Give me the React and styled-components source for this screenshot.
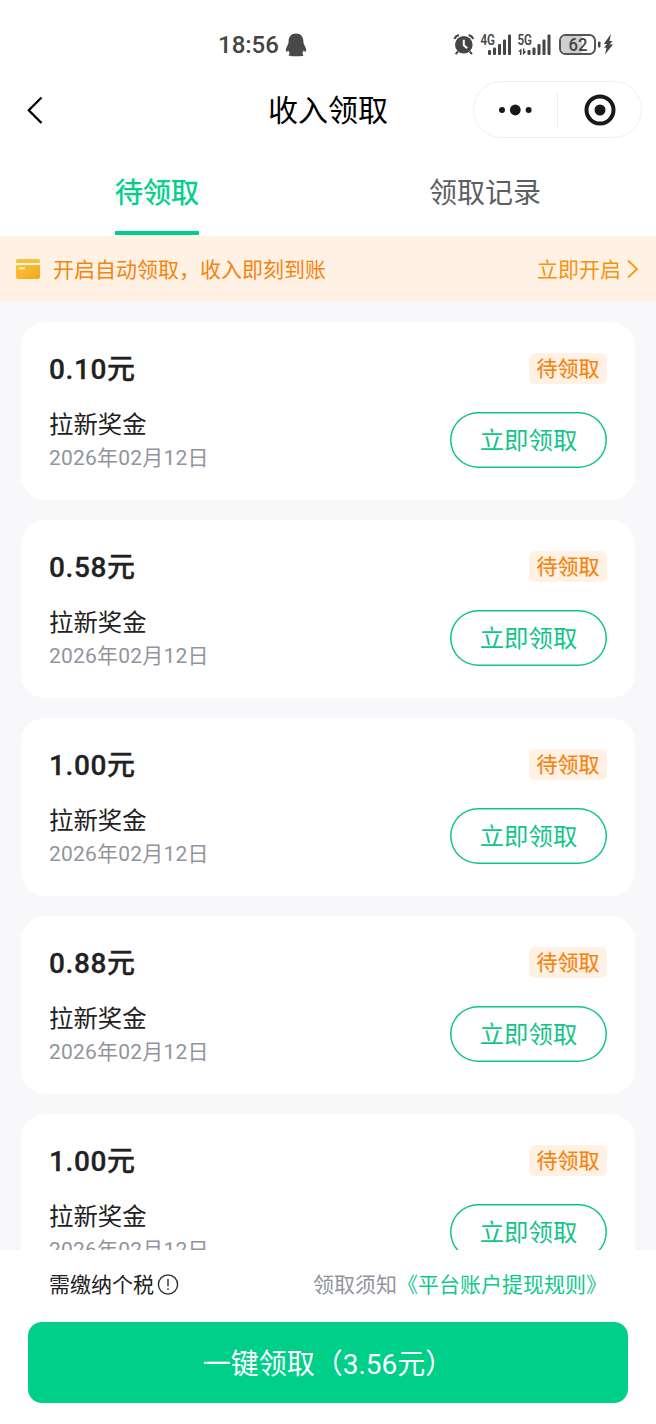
import React from "react";
import styled, { createGlobalStyle } from "styled-components";

const GlobalStyle = createGlobalStyle`
  * {
    box-sizing: border-box;
  }
  :root {
    --point-color: #00cf8a;
    --warn-color: #f5830f;
    --warn-bg: #fff1e3;
    --page-bg: #f8f8fb;
    --text-color: #1f2123;
    --sub-color: #92949c;
  }
  body {
    margin: 0;
    background-color: #fff;
    color: var(--text-color);
    font-family: Roboto, "Noto Sans CJK SC", sans-serif;
  }
  button {
    font-family: inherit;
    padding: 0;
    cursor: pointer;
  }
`;

const Page = styled.div`
  width: 656px;
  height: 1424px;
  display: flex;
  flex-direction: column;
  overflow: hidden;
  background-color: #fff;
`;

const StatusBar = styled.div`
  height: 75px;
  padding: 14px 42px 0 218px;
  display: flex;
  align-items: center;
  justify-content: space-between;
  color: #454545;
`;

const Clock = styled.div`
  display: flex;
  align-items: center;
  gap: 6px;
  font-size: 24px;
  font-weight: 500;
  line-height: 30px;
`;

const NavBar = styled.div`
  height: 69px;
  padding: 0 14px 0 24px;
  display: grid;
  grid-template-columns: 1fr auto 1fr;
  align-items: center;
  color: #000;
`;

const BackButton = styled.button`
  display: flex;
  border: none;
  background: none;
  color: inherit;
`;

const Title = styled.h1`
  margin: 0 10px 0 0;
  padding-top: 2px;
  font-size: 30px;
  font-weight: 400;
  line-height: 40px;
`;

const Capsule = styled.div`
  justify-self: end;
  width: 169px;
  height: 57px;
  border: 1px solid #f0f0f0;
  border-radius: 29px;
  display: flex;
  align-items: center;
`;

const CapsuleItem = styled.div`
  flex: 1;
  height: 36px;
  display: flex;
  align-items: center;
  justify-content: center;
  & + & {
    border-left: 1px solid #efefef;
  }
`;

const Tabs = styled.div`
  height: 92px;
  display: flex;
`;

const TabItem = styled.div`
  flex: 1;
  display: flex;
  justify-content: center;
  padding-right: 14px;
  span {
    height: 91px;
    padding-top: 30px;
    font-size: 28px;
    line-height: 40px;
    color: ${({ $active }) => ($active ? "var(--point-color)" : "#5c5e63")};
    -webkit-text-stroke: ${({ $active }) => ($active ? "0.4px" : "0")};
    border-bottom: 4px solid
      ${({ $active }) => ($active ? "var(--point-color)" : "transparent")};
  }
`;

const Banner = styled.div`
  height: 66px;
  padding: 0 17px 0 15px;
  display: flex;
  align-items: center;
  background-color: var(--warn-bg);
  color: var(--warn-color);
  font-size: 21px;
  line-height: 30px;
`;

const BannerText = styled.p`
  flex: 1;
  margin: 1px 0 0 12px;
`;

const BannerLink = styled.div`
  display: flex;
  align-items: center;
  gap: 5px;
  color: #f8920a;
  span {
    padding-top: 1px;
  }
`;

const List = styled.div`
  flex: 1;
  min-height: 0;
  overflow: hidden;
  padding: 20px 21px 0;
  display: flex;
  flex-direction: column;
  gap: 20px;
  background-color: var(--page-bg);
`;

const Card = styled.div`
  flex: none;
  height: 178px;
  padding: 31px 28px 0;
  border-radius: 24px;
  background-color: #fff;
`;

const CardRow = styled.div`
  display: flex;
  align-items: center;
  justify-content: space-between;
  & + & {
    margin-top: 23px;
  }
`;

const Amount = styled.div`
  padding-top: 2px;
  font-size: 28px;
  font-weight: 500;
  line-height: 29px;
  letter-spacing: 0.6px;
  -webkit-text-stroke: 0.3px;
`;

const Badge = styled.div`
  width: 78px;
  height: 31px;
  padding-top: 1px;
  border-radius: 6px;
  background-color: var(--warn-bg);
  color: var(--warn-color);
  font-size: 21px;
  line-height: 31px;
  text-align: center;
  -webkit-text-stroke: 0.2px;
`;

const Reason = styled.div`
  padding-top: 2px;
  font-size: 24.4px;
  line-height: 32px;
`;

const DateText = styled.div`
  padding-top: 1px;
  font-size: 21px;
  line-height: 33px;
  letter-spacing: 0.2px;
  color: var(--sub-color);
`;

const ClaimButton = styled.button`
  width: 157px;
  height: 56px;
  margin-bottom: 2px;
  padding-top: 2px;
  border: none;
  border-radius: 28px;
  box-shadow: inset 0 0 0 1.5px #12c48a;
  background-color: #fff;
  color: #12c48a;
  font-size: 24.4px;
  line-height: 36px;
`;

const Footer = styled.div`
  height: 174px;
  padding: 19px 28px 0;
  background-color: #fff;
`;

const FooterNotes = styled.div`
  display: flex;
  justify-content: space-between;
  padding: 0 21px;
  font-size: 21px;
  line-height: 32px;
`;

const TaxNote = styled.div`
  display: flex;
  align-items: center;
  gap: 3px;
`;

const RuleNote = styled.div`
  color: var(--sub-color);
  a {
    color: #10c88c;
  }
`;

const ClaimAllButton = styled.button`
  display: block;
  width: 100%;
  height: 81px;
  margin-top: 21px;
  padding-bottom: 2px;
  border: none;
  border-radius: 14px;
  background-color: var(--point-color);
  color: #fff;
  font-size: 28px;
`;

const PenguinIcon = () => (
  <svg width="22" height="24" viewBox="0 0 22 24" fill="#484848">
    <path d="M11 0.5C6.2 0.5 3.6 3.8 3.6 8.4C3.6 9.8 3.2 11 2.4 12.6C1.2 14.8 0.4 17 1 18.4C1.5 19 2.5 18.4 3.4 17.6C3.7 18.8 4.3 19.8 5 20.6C4 21 3.6 21.8 3.8 22.6C4.1 23.3 6.200 23.300 11 23.300C15.800 23.300 17.900 23.300 18.200 22.600C18.400 21.800 18 21 17 20.600C17.700 19.800 18.300 18.800 18.600 17.600C19.500 18.400 20.500 19 21 18.400C21.600 17 20.800 14.800 19.600 12.600C18.800 11 18.400 9.800 18.400 8.400C18.400 3.800 15.800 0.500 11 0.500Z" />
  </svg>
);

const StatusIcons = () => (
  <svg
    width="162"
    height="26"
    viewBox="0 0 162 26"
    fill="#454545"
    fontFamily="Roboto, sans-serif"
  >
    {/* alarm */}
    <circle cx="11.800" cy="12.800" r="8.800" />
    <path
      d="M2.400 7Q3.600 3.800 7 3M21.200 7Q20 3.800 16.600 3M6 19.500L3.600 22.200M17.600 19.500L20 22.200"
      fill="none"
      stroke="#454545"
      strokeWidth="2"
    />
    <path d="M11.800 7.800V13.200L15.200 16.200" fill="none" stroke="#fff" strokeWidth="2" />
    {/* first sim */}
    <text x="28.500" y="13" fontSize="15" fontWeight="600" textLength="14.500" lengthAdjust="spacingAndGlyphs">4G</text>
    <rect x="36" y="18" width="3" height="5" rx="1" />
    <rect x="41" y="15.500" width="3" height="7.500" rx="1" />
    <rect x="46" y="12" width="3" height="11" rx="1" />
    <rect x="51" y="7.500" width="3" height="15.500" rx="1" />
    <rect x="56" y="2.500" width="3" height="20.500" rx="1" />
    {/* second sim */}
    <text x="65.500" y="13" fontSize="15" fontWeight="600" textLength="14.500" lengthAdjust="spacingAndGlyphs">5G</text>
    <path d="M66 19.500L69.500 16.500V23H68V19.800ZM71 16.500H72.400V19.200L74.500 19.500L71 23Z" />
    <rect x="75.500" y="18" width="3" height="5" rx="1" />
    <rect x="80.500" y="15.500" width="3" height="7.500" rx="1" />
    <rect x="85.500" y="12" width="3" height="11" rx="1" />
    <rect x="90.500" y="7.500" width="3" height="15.500" rx="1" />
    <rect x="95.500" y="2.500" width="3" height="20.500" rx="1" />
    {/* battery */}
    <rect x="108" y="3" width="35" height="19" rx="5.500" fill="#fff" stroke="#555" strokeWidth="2" />
    <path d="M114 4H130V21H114Q109 21 109 16V9Q109 4 114 4Z" fill="#cfcfcf" />
    <text x="126" y="19" fontSize="18.500" fontWeight="500" textAnchor="middle" textLength="19" lengthAdjust="spacingAndGlyphs">62</text>
    <rect x="146" y="9.500" width="2.500" height="6" rx="1" />
    <path d="M159 2L151.800 12H155L152 15.800H154.500L153 22.500L161 12.500H157.500L160.500 9H157.500Z" />
  </svg>
);

const CardIcon = () => (
  <svg width="26" height="22" viewBox="0 0 26 22">
    <defs>
      <linearGradient id="cardFill" x1="0" y1="0" x2="1" y2="1">
        <stop offset="0" stopColor="#fac63e" />
        <stop offset="1" stopColor="#f3a51c" />
      </linearGradient>
    </defs>
    <path d="M1 3Q1 1 3 1H23Q25 1 25 3V5.200H1Z" fill="#f7c13c" />
    <path d="M1 7H25V19Q25 21 23 21H3Q1 21 1 19Z" fill="url(#cardFill)" />
    <rect x="1" y="5" width="24" height="2" fill="#fff8e0" />
    <rect x="4" y="9.500" width="6" height="1.800" rx="0.900" fill="#fff3cf" />
  </svg>
);

const InfoIcon = () => (
  <svg width="22" height="22" viewBox="0 0 22 22" fill="none" stroke="#2b2d30" strokeWidth="1.400">
    <circle cx="11" cy="10.500" r="9.600" />
    <path d="M11 5V12.300M11 14.300V15.900" />
  </svg>
);

const incomeData = [
  { amount: "0.10元", reason: "拉新奖金", date: "2026年02月12日" },
  { amount: "0.58元", reason: "拉新奖金", date: "2026年02月12日" },
  { amount: "1.00元", reason: "拉新奖金", date: "2026年02月12日" },
  { amount: "0.88元", reason: "拉新奖金", date: "2026年02月12日" },
  { amount: "1.00元", reason: "拉新奖金", date: "2026年02月12日" },
];

const IncomeCard = ({ item }) => (
  <Card>
    <CardRow>
      <Amount>{item.amount}</Amount>
      <Badge>待领取</Badge>
    </CardRow>
    <CardRow>
      <div>
        <Reason>{item.reason}</Reason>
        <DateText>{item.date}</DateText>
      </div>
      <ClaimButton>立即领取</ClaimButton>
    </CardRow>
  </Card>
);

const App = () => {
  return (
    <Page>
      <GlobalStyle />
      <StatusBar>
        <Clock>
          18:56
          <PenguinIcon />
        </Clock>
        <StatusIcons />
      </StatusBar>
      <NavBar>
        <BackButton aria-label="返回">
          <svg width="20" height="30" viewBox="0 0 20 30" fill="none" stroke="#000" strokeWidth="2.300">
            <path d="M17.500 2.500L4.800 15.200L17.500 28" />
          </svg>
        </BackButton>
        <Title>收入领取</Title>
        <Capsule>
          <CapsuleItem>
            <svg width="34" height="12" viewBox="0 0 34 12" fill="#191919">
              <circle cx="3" cy="6" r="3" />
              <circle cx="16.300" cy="6" r="5.400" />
              <circle cx="29.600" cy="6" r="3" />
            </svg>
          </CapsuleItem>
          <CapsuleItem>
            <svg width="32" height="32" viewBox="0 0 32 32">
              <circle cx="16" cy="16" r="13.500" fill="none" stroke="#191919" strokeWidth="4" />
              <circle cx="16" cy="16" r="5.500" fill="#191919" />
            </svg>
          </CapsuleItem>
        </Capsule>
      </NavBar>
      <Tabs>
        <TabItem $active>
          <span>待领取</span>
        </TabItem>
        <TabItem>
          <span>领取记录</span>
        </TabItem>
      </Tabs>
      <Banner>
        <CardIcon />
        <BannerText>开启自动领取，收入即刻到账</BannerText>
        <BannerLink>
          <span>立即开启</span>
          <svg width="13" height="20" viewBox="0 0 13 20" fill="none" stroke="#f5990f" strokeWidth="1.800">
            <path d="M2 1.500L11 10L2 18.500" />
          </svg>
        </BannerLink>
      </Banner>
      <List>
        {incomeData.map((item, index) => (
          <IncomeCard key={index} item={item} />
        ))}
      </List>
      <Footer>
        <FooterNotes>
          <TaxNote>
            需缴纳个税
            <InfoIcon />
          </TaxNote>
          <RuleNote>
            领取须知<a>《平台账户提现规则》</a>
          </RuleNote>
        </FooterNotes>
        <ClaimAllButton>一键领取（3.56元）</ClaimAllButton>
      </Footer>
    </Page>
  );
};

export default App;
